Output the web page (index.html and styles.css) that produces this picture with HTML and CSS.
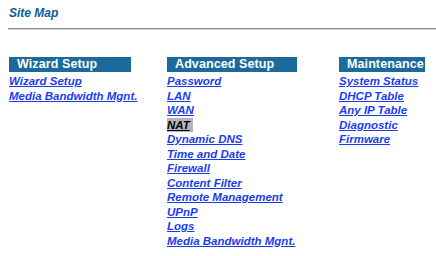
FILE: index.html
```html
<!DOCTYPE html>
<html lang="en">
<head>
    <meta charset="UTF-8">
    <title>Site Map</title>
    <link rel="stylesheet" href="styles.css">
</head>
<body>
    <div class="title">Site Map</div>
    <div class="rule"></div>

    <div class="sitemap">
        <div class="column col-wizard">
            <div class="head">Wizard Setup</div>
            <a href="#">Wizard Setup</a>
            <a href="#">Media Bandwidth Mgnt.</a>
        </div>
        <div class="column col-advanced">
            <div class="head">Advanced Setup</div>
            <a href="#">Password</a>
            <a href="#">LAN</a>
            <a href="#">WAN</a>
            <a href="#" class="active">NAT</a>
            <a href="#">Dynamic DNS</a>
            <a href="#">Time and Date</a>
            <a href="#">Firewall</a>
            <a href="#">Content Filter</a>
            <a href="#">Remote Management</a>
            <a href="#">UPnP</a>
            <a href="#">Logs</a>
            <a href="#">Media Bandwidth Mgnt.</a>
        </div>
        <div class="column col-maint">
            <div class="head">Maintenance</div>
            <a href="#">System Status</a>
            <a href="#">DHCP Table</a>
            <a href="#">Any IP Table</a>
            <a href="#">Diagnostic</a>
            <a href="#">Firmware</a>
        </div>
    </div>
</body>
</html>
```

FILE: styles.css
```css
body {
    margin: 0;
    padding: 6px 0 0 9px;
    background: #fff;
    font-family: "Liberation Sans", Arial, sans-serif;
}

.title {
    color: #0b5c99;
    font-size: 12px;
    font-weight: bold;
    font-style: italic;
    height: 15px;
    line-height: 15px;
}

.rule {
    margin: 7px 0 0 -1px;
    border-top: 1px solid #8a8a8a;
    border-bottom: 1px solid #d8d8dc;
}

.sitemap {
    display: flex;
    margin-top: 27px;
}

.column {
    display: flex;
    flex-direction: column;
    align-items: flex-start;
}

.col-wizard {
    width: 158px;
}

.col-advanced {
    width: 172px;
}

.head {
    box-sizing: border-box;
    background: #1a6b9b;
    color: #fff;
    font-size: 12.5px;
    font-weight: bold;
    height: 15px;
    line-height: 15px;
    padding: 0 2px 0 8px;
    margin-bottom: 2px;
    letter-spacing: 0.1px;
    white-space: nowrap;
}

.col-wizard .head {
    width: 122px;
}

.col-advanced .head {
    width: 130px;
}

.col-maint .head {
    width: 86px;
}

.column a {
    color: #1a3cf0;
    font-size: 11.5px;
    font-weight: bold;
    font-style: italic;
    line-height: 14.5px;
    text-decoration: underline;
}

.column a.active {
    color: #000;
    background: #b4b4bc;
    padding-right: 3px;
}
```
